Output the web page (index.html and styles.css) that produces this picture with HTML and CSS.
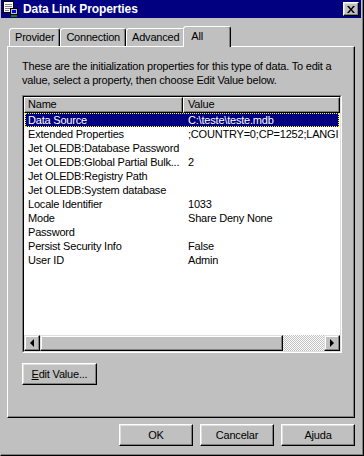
FILE: index.html
```html
<!DOCTYPE html>
<html lang="en">
<head>
  <meta charset="UTF-8">
  <meta name="viewport" content="width=device-width, initial-scale=1.0">
  <title>Data Link Properties</title>
  <link rel="stylesheet" href="styles.css">
</head>
<body>
  <div class="window">
    <div class="titlebar">
      <svg class="app-icon" width="16" height="16" viewBox="0 0 16 16" shape-rendering="crispEdges">
        <rect x="0.5" y="0.5" width="10" height="11" fill="#fff" stroke="#000"/>
        <path d="M2 3.5h7M2 5.5h7M2 7.5h5M2 9.5h4" stroke="#808080"/>
        <rect x="7.5" y="7.5" width="7" height="6" fill="#c0c0c0" stroke="#000"/>
        <rect x="9" y="9" width="4" height="3" fill="#0000ff"/>
        <rect x="8" y="14" width="6" height="2" fill="#008000"/>
      </svg>
      <span class="title">Data Link Properties</span>
      <button class="close" type="button">
        <svg width="8" height="7" viewBox="0 0 8 7"><path d="M0 0h2l2 2.4L6 0h2L5 3.5 8 7H6L4 4.6 2 7H0l3-3.5z"/></svg>
      </button>
    </div>
    <div class="body">
      <div class="tabs">
        <div class="tab">Provider</div>
        <div class="tab">Connection</div>
        <div class="tab">Advanced</div>
        <div class="tab active">All</div>
      </div>
      <div class="panel">
        <p class="intro">These are the initialization properties for this type of data. To edit a<br>value, select a property, then choose Edit Value below.</p>
        <div class="list">
          <div class="list-inner">
            <div class="list-head">
              <div class="head-cell name-col">Name</div>
              <div class="head-cell value-col">Value</div>
            </div>
            <div class="list-rows">
              <div class="row selected"><span class="name">Data Source</span><span class="value">C:\teste\teste.mdb</span></div>
              <div class="row"><span class="name">Extended Properties</span><span class="value">;COUNTRY=0;CP=1252;LANGID=0x0409</span></div>
              <div class="row"><span class="name">Jet OLEDB:Database Password</span><span class="value"></span></div>
              <div class="row"><span class="name">Jet OLEDB:Global Partial Bulk...</span><span class="value">2</span></div>
              <div class="row"><span class="name">Jet OLEDB:Registry Path</span><span class="value"></span></div>
              <div class="row"><span class="name">Jet OLEDB:System database</span><span class="value"></span></div>
              <div class="row"><span class="name">Locale Identifier</span><span class="value">1033</span></div>
              <div class="row"><span class="name">Mode</span><span class="value">Share Deny None</span></div>
              <div class="row"><span class="name">Password</span><span class="value"></span></div>
              <div class="row"><span class="name">Persist Security Info</span><span class="value">False</span></div>
              <div class="row"><span class="name">User ID</span><span class="value">Admin</span></div>
            </div>
            <div class="hscroll">
              <div class="sb-btn"><span class="arrow-left"></span></div>
              <div class="sb-thumb"></div>
              <div class="sb-track"></div>
              <div class="sb-btn"><span class="arrow-right"></span></div>
            </div>
          </div>
        </div>
        <button class="btn edit-btn" type="button"><u>E</u>dit Value...</button>
      </div>
      <div class="actions">
        <button class="btn" type="button">OK</button>
        <button class="btn" type="button">Cancelar</button>
        <button class="btn" type="button">Ajuda</button>
      </div>
    </div>
  </div>
</body>
</html>
```

FILE: styles.css
```css
* {
  box-sizing: border-box;
}

body {
  margin: 0;
  background-color: #c0c0c0;
  font-family: "Liberation Sans", Arial, sans-serif;
  font-size: 11px;
  letter-spacing: -0.2px;
  color: #000;
}

.window {
  width: 364px;
  height: 456px;
  border-left: 1px solid #c0c0c0;
  border-right: 1px solid #000;
  border-bottom: 1px solid #000;
  box-shadow: inset -1px -1px #808080;
  padding: 0 2px 2px 0;
}

.titlebar {
  height: 18px;
  background-color: #000080;
  display: flex;
  align-items: center;
  padding-left: 2px;
}

.app-icon {
  display: block;
}

.title {
  margin-left: 4px;
  color: #fff;
  font-weight: bold;
  font-size: 12px;
  letter-spacing: -0.1px;
}

.close {
  margin-left: auto;
  margin-right: 2px;
  width: 16px;
  height: 14px;
  padding: 0;
  background: #c0c0c0;
  border: 1px solid;
  border-color: #fff #000 #000 #fff;
  box-shadow: inset -1px -1px #808080, inset 1px 1px #dfdfdf;
  display: flex;
  align-items: center;
  justify-content: center;
}

.close svg {
  display: block;
}

.body {
  padding: 8px 6px 0;
}

.tabs {
  display: flex;
  align-items: flex-end;
  height: 20px;
  padding-left: 2px;
}

.tab {
  height: 18px;
  line-height: 16px;
  padding: 0 5px;
  background: #c0c0c0;
  border: 1px solid;
  border-bottom: none;
  border-color: #fff #000 transparent #fff;
  border-radius: 3px 3px 0 0;
  box-shadow: inset -1px 0 #808080;
  white-space: nowrap;
}

.tab.active {
  position: relative;
  z-index: 1;
  height: 21px;
  line-height: 18px;
  margin: 0 -2px -1px;
  padding: 0 27px 2px 7px;
}

.panel {
  height: 372px;
  border: 1px solid;
  border-color: #fff #000 #000 #fff;
  box-shadow: inset -1px -1px #808080;
  padding: 12px 0 0 14px;
}

.intro {
  margin: 0 0 8px;
  line-height: 14px;
  white-space: nowrap;
}

.list {
  width: 320px;
  height: 258px;
  border: 1px solid;
  border-color: #808080 #fff #fff #808080;
}

.list-inner {
  height: 100%;
  border: 1px solid;
  border-color: #000 #dfdfdf #dfdfdf #000;
  background: #fff;
  display: flex;
  flex-direction: column;
}

.list-head {
  display: flex;
  height: 16px;
}

.head-cell {
  background: #c0c0c0;
  border: 1px solid;
  border-color: #fff #000 #000 #fff;
  box-shadow: inset -1px -1px #808080;
  line-height: 13px;
  padding-left: 3px;
}

.name-col {
  width: 159px;
}

.value-col {
  flex: 1;
  padding-left: 4px;
}

.list-rows {
  flex: 1;
  overflow: hidden;
}

.row {
  display: flex;
  height: 14px;
  line-height: 12px;
  margin: 0 1px;
  border: 1px dotted transparent;
  white-space: nowrap;
  overflow: hidden;
}

.row .name {
  width: 157px;
  flex: none;
  padding-left: 2px;
  overflow: hidden;
}

.row .value {
  padding-left: 5px;
}

.row.selected {
  background: #000080;
  color: #fff;
  border-color: #ff0;
}

.hscroll {
  display: flex;
  height: 16px;
}

.sb-btn,
.sb-thumb {
  height: 16px;
  background: #c0c0c0;
  border: 1px solid;
  border-color: #dfdfdf #000 #000 #dfdfdf;
  box-shadow: inset -1px -1px #808080, inset 1px 1px #fff;
}

.sb-btn {
  width: 16px;
  display: flex;
  align-items: center;
  justify-content: center;
}

.sb-thumb {
  width: 243px;
}

.sb-track {
  flex: 1;
  background: repeating-conic-gradient(#fff 0 25%, #c0c0c0 0 50%) 0 0 / 2px 2px;
}

.arrow-left,
.arrow-right {
  width: 0;
  height: 0;
  border-top: 4px solid transparent;
  border-bottom: 4px solid transparent;
}

.arrow-left {
  border-right: 4px solid #000;
}

.arrow-right {
  border-left: 4px solid #000;
}

.btn {
  font: inherit;
  letter-spacing: inherit;
  color: #000;
  background: #c0c0c0;
  border: 1px solid;
  border-color: #fff #000 #000 #fff;
  box-shadow: inset -1px -1px #808080, inset 1px 1px #dfdfdf;
  padding: 0;
  height: 22px;
}

.edit-btn {
  display: block;
  width: 75px;
  margin-top: 10px;
}

.actions {
  display: flex;
  justify-content: flex-end;
  gap: 7px;
  margin-top: 6px;
}

.actions .btn {
  width: 74px;
}
```
